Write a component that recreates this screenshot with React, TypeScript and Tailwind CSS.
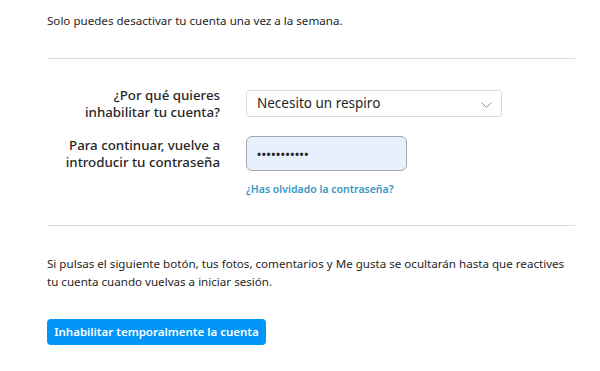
export default function App() {
  return (
    <div
      className="w-[600px] h-[371px] bg-white pl-[47px] pr-[25px] text-[#262626] overflow-hidden"
      style={{ fontFamily: '"Segoe UI", "Noto Sans", sans-serif' }}
    >
      <p className="text-[11.6px] leading-[18px] pt-[12px]">
        Solo puedes desactivar tu cuenta una vez a la semana.
      </p>

      <div className="mt-[28px] border-t border-[#dbdbdb]" />

      {/* Form */}
      <div className="mt-[31px] flex flex-col gap-[19px]">
        <div className="flex items-center h-[27px] gap-[26px]">
          <label className="w-[173px] shrink-0 text-right text-[13.3px] leading-[17px] font-medium">
            ¿Por qué quieres
            <br />
            inhabilitar tu cuenta?
          </label>
          <div className="relative w-[256px] h-[27px] border border-[#dbdbdb] rounded-[3px] flex items-center pl-[10px]">
            <span className="text-[13.5px]">Necesito un respiro</span>
            <svg
              className="absolute right-[9px] top-[11px]"
              width="11"
              height="6"
              viewBox="0 0 11 6"
              fill="none"
              stroke="#8e8e8e"
              strokeWidth="1"
            >
              <path d="M0.5 0.5l5 5 5-5" />
            </svg>
          </div>
        </div>

        <div className="flex items-start gap-[26px]">
          <label className="w-[173px] shrink-0 h-[35px] flex items-center justify-end text-right text-[13.3px] leading-[17px] font-medium">
            Para continuar, vuelve a
            <br />
            introducir tu contraseña
          </label>
          <div className="flex flex-col">
            <div className="w-[161px] h-[35px] bg-[#e8f0fe] border border-[#a8a8a8] rounded-[6px] flex items-center pl-[10px]">
              <span className="text-[11px] font-bold tracking-[0.6px] leading-none">•••••••••••</span>
            </div>
            <a className="mt-[11px] text-[10.5px] leading-[14px] font-semibold text-[#3897c4]">
              ¿Has olvidado la contraseña?
            </a>
          </div>
        </div>
      </div>

      <div className="mt-[29px] border-t border-[#dbdbdb]" />

      <p className="mt-[29px] text-[11.6px] leading-[18px] w-[528px]">
        Si pulsas el siguiente botón, tus fotos, comentarios y Me gusta se ocultarán hasta que reactives
        <br />
        tu cuenta cuando vuelvas a iniciar sesión.
      </p>

      <button className="mt-[28px] h-[26px] w-[219px] rounded-[4px] bg-[#0095f6] text-white text-[11.5px] font-semibold whitespace-nowrap">
        Inhabilitar temporalmente la cuenta
      </button>
    </div>
  );
}
